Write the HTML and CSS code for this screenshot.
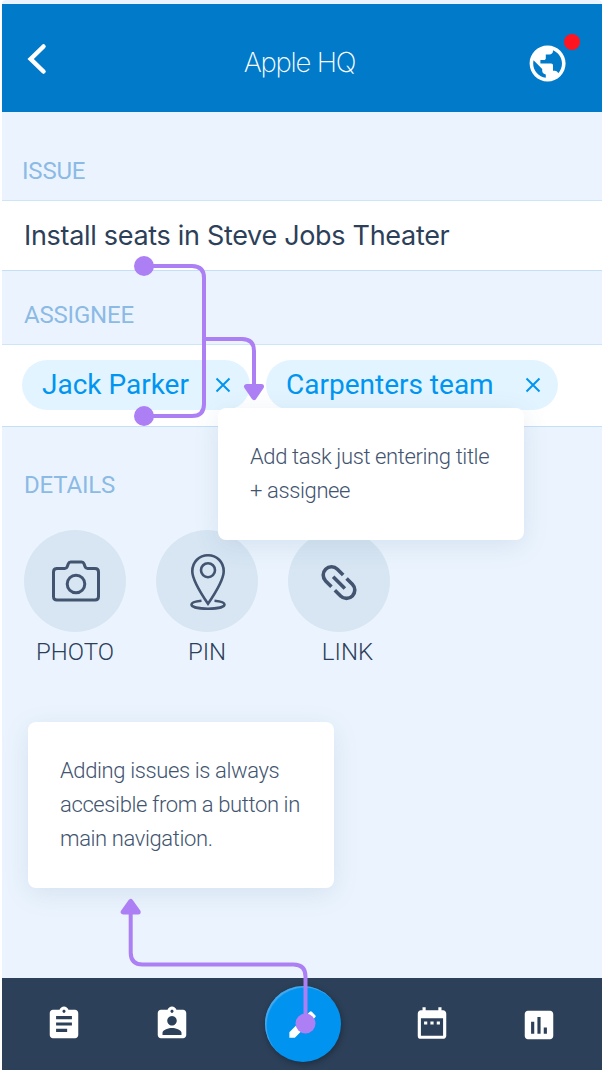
FILE: index.html
```html
<!DOCTYPE html>
<html lang="en">
<head>
<meta charset="utf-8">
<title>Apple HQ</title>
<link rel="stylesheet" href="styles.css">
</head>
<body>
<div class="screen">
  <header class="topbar">
    <svg class="back" width="20" height="32" viewBox="0 0 20 32"><path d="M16.500 3.500 3.700 16 16.500 28.500"/></svg>
    <h1 class="title">Apple HQ</h1>
    <div class="globe">
      <svg width="43.2" height="43.2" viewBox="0 0 24 24"><path d="M12 2C6.48 2 2 6.48 2 12s4.48 10 10 10 10-4.48 10-10S17.52 2 12 2zm-1 17.93c-3.95-.49-7-3.85-7-7.93 0-.62.08-1.21.21-1.79L9 15v1c0 1.1.9 2 2 2v1.93zm6.9-2.54c-.26-.81-1-1.39-1.9-1.39h-1v-3c0-.55-.45-1-1-1H8v-2h2c.55 0 1-.45 1-1V7h2c1.1 0 2-.9 2-2v-.41c2.93 1.19 5 4.06 5 7.41 0 2.08-.8 3.97-2.1 5.39z"/></svg>
      <span class="badge"></span>
    </div>
  </header>

  <main class="content">
    <h2 class="label label-issue">ISSUE</h2>
    <div class="row row-issue">Install seats in Steve Jobs Theater</div>
    <h2 class="label label-assignee">ASSIGNEE</h2>
    <div class="row row-chips">
      <div class="chip chip-person"><span class="chip-name">Jack Parker</span><svg width="16" height="16" viewBox="0 0 16 16"><path d="m1.5 1.5 13 13m0-13-13 13"/></svg></div>
      <div class="chip chip-team"><span class="chip-name">Carpenters team</span><svg width="16" height="16" viewBox="0 0 16 16"><path d="m1.5 1.5 13 13m0-13-13 13"/></svg></div>
    </div>
    <h2 class="label label-details">DETAILS</h2>
    <div class="details">
      <div class="detail">
        <span class="disc"><svg width="102" height="102" viewBox="0 0 102 102"><path d="M32 38.5h8.8c1.4 0 2-.5 2.4-1.7l1.1-3c.5-1.4 1-1.8 2.3-1.8h11.1c1.3 0 1.8.4 2.3 1.8l1.1 3c.4 1.2 1 1.7 2.4 1.7H71c2.4 0 3.500 1.100 3.500 3.500v24.500c0 2.400-1.100 3.500-3.500 3.500H33c-2.400 0-3.500-1.100-3.500-3.500V42c0-2.400 1.100-3.500 3.500-3.500z"/><circle cx="52" cy="54" r="8.800"/></svg></span>
        <span class="caption caption-photo">PHOTO</span>
      </div>
      <div class="detail">
        <span class="disc"><svg width="102" height="102" viewBox="0 0 102 102"><g class="fine"><path d="M52 73.800C44 62 36.300 50 36.300 41.200 36.300 32 43.300 25.200 52 25.200S67.700 32 67.700 41.200C67.700 50 60 62 52 73.800z"/><circle cx="52" cy="40.200" r="7"/><path d="M45.500 70.700c-5.800.6-10 2-10 3.800 0 2.400 7.200 4.200 16.500 4.200s16.500-1.800 16.500-4.200c0-1.800-4.200-3.200-10-3.800"/></g></svg></span>
        <span class="caption caption-pin">PIN</span>
      </div>
      <div class="detail">
        <span class="disc"><svg width="102" height="102" viewBox="0 0 102 102"><g class="bold" transform="translate(51 52.600) rotate(45)"><path d="M-2.400-8.300H-10.600a8.300 8.300 0 0 0 0 16.600H-2.400M2.400-8.300H10.600a8.300 8.300 0 0 1 0 16.600H2.400M-8.300 0H8.300"/></g></svg></span>
        <span class="caption caption-link">LINK</span>
      </div>
    </div>
  </main>

  <nav class="tabbar">
    <svg class="tab tab-list" width="38" height="38" viewBox="0 0 24 24"><path d="M19 3h-4.180C14.400 1.840 13.300 1 12 1c-1.300 0-2.400.840-2.820 2H5c-1.100 0-2 .9-2 2v14c0 1.100.9 2 2 2h14c1.100 0 2-.9 2-2V5c0-1.100-.9-2-2-2zm-7 0c.55 0 1 .45 1 1s-.45 1-1 1-1-.45-1-1 .45-1 1-1zm2 14H7v-2h7v2zm3-4H7v-2h10v2zm0-4H7V7h10v2z"/></svg>
    <svg class="tab tab-person" width="38" height="38" viewBox="0 0 24 24"><path d="M19 3h-4.180C14.400 1.840 13.300 1 12 1c-1.300 0-2.400.840-2.820 2H5c-1.100 0-2 .9-2 2v14c0 1.100.9 2 2 2h14c1.100 0 2-.9 2-2V5c0-1.100-.9-2-2-2zm-7 0c.55 0 1 .45 1 1s-.45 1-1 1-1-.45-1-1 .45-1 1-1zm0 4c1.660 0 3 1.340 3 3s-1.340 3-3 3-3-1.340-3-3 1.340-3 3-3zm6 12H6v-1.400c0-2 4-3.100 6-3.100s6 1.100 6 3.100V19z"/></svg>
    <div class="compose"><svg width="35" height="35" viewBox="0 0 24 24"><path d="M3 17.250V21h3.750L17.810 9.940l-3.750-3.750L3 17.250zM20.710 7.040a1 1 0 0 0 0-1.410l-2.340-2.340a1 1 0 0 0-1.410 0l-1.830 1.830 3.750 3.750 1.830-1.830z"/></svg></div>
    <svg class="tab tab-calendar" width="38" height="38" viewBox="0 0 24 24"><path d="M9 11H7v2h2v-2zm4 0h-2v2h2v-2zm4 0h-2v2h2v-2zm2-7h-1V2h-2v2H8V2H6v2H5c-1.110 0-1.990.9-1.990 2L3 20a2 2 0 0 0 2 2h14c1.100 0 2-.9 2-2V6c0-1.100-.9-2-2-2zm0 16H5V9h14v11z"/></svg>
    <svg class="tab tab-chart" width="38" height="38" viewBox="0 0 24 24"><path d="M19 3H5c-1.100 0-2 .9-2 2v14c0 1.100.9 2 2 2h14c1.100 0 2-.9 2-2V5c0-1.100-.9-2-2-2zM9 17.500H7v-7.500h2v7.500zm4 0h-2V7h2v10.500zm4 0h-2v-4h2v4z"/></svg>
  </nav>

  <aside class="note note-task">Add task just entering title<br>+ assignee</aside>
  <aside class="note note-nav">Adding issues is always<br>accesible from a button in<br>main navigation.</aside>
  <svg class="connector connector-task" width="140" height="180" viewBox="134 250 140 180">
    <path class="wire" d="M144 266H192Q204 266 204 278V404Q204 416 192 416H144M204 339H242Q254 339 254 351V388"/>
    <circle cx="144" cy="266" r="10"/><circle cx="144" cy="416" r="10"/>
    <path class="head" d="M246.500 386.500H261.500L254 397.500Z"/>
  </svg>
  <svg class="connector connector-nav" width="210" height="150" viewBox="114 890 210 150">
    <path class="wire" d="M305.500 1023V976.500Q305.500 964.500 293.500 964.500H142.700Q130.700 964.500 130.700 952.500V910"/>
    <circle cx="305.500" cy="1023.500" r="10"/>
    <path class="head" d="M123.200 912H138.200L130.700 901.500Z"/>
  </svg>
</div>
</body>
</html>
```
FILE: styles.css
```css
* { box-sizing: border-box; }

body {
  margin: 0;
  background: #fff;
  font-family: Roboto, "Liberation Sans", sans-serif;
  color: #2c4059;
}

svg { display: block; flex: none; }

.screen {
  position: relative;
  display: flex;
  flex-direction: column;
  width: 600px;
  height: 1070px;
  margin-left: 2px;
  padding-top: 4px;
  border-radius: 4px 4px 0 0;
  background: #ebf4fe;
}

/* Header */
.topbar {
  display: grid;
  grid-template-columns: 76px 1fr 76px;
  align-items: center;
  height: 108px;
  background: #007ac9;
}
.back { margin: 2px 0 0 25px; fill: none; stroke: #fff; stroke-width: 4.500; stroke-linecap: round; }
.title {
  margin: 7px 0 0 -5px;
  font: 200 27.500px/36px Inter, sans-serif;
  letter-spacing: -1.200px;
  text-align: center;
  color: #fff;
}
.globe { position: relative; width: 44px; margin-top: 12px; }
.globe svg { fill: #fff; }
.badge {
  position: absolute;
  top: -8px;
  left: 38px;
  width: 16px;
  height: 16px;
  border-radius: 50%;
  background: #ff1420;
}

/* Form */
.content { flex: 1; }
.label {
  margin: 0;
  padding-left: 22px;
  font-size: 24px;
  font-weight: 400;
  line-height: 28px;
  letter-spacing: -.200px;
  color: #8bbae5;
}
.label-issue { height: 88px; padding: 45px 0 0 20px; }
.label-assignee { height: 73px; padding-top: 30px; }
.label-details { height: 103px; padding-top: 44px; }
.row {
  display: flex;
  align-items: center;
  background: #fff;
  border-top: 1px solid #cde5f8;
  border-bottom: 1px solid #c4e0f7;
}
.row-issue {
  height: 71px;
  padding-left: 22px;
  font: 400 27px/34px Inter, sans-serif;
  letter-spacing: -.310px;
}
.row-chips { gap: 16px; height: 83px; padding: 0 0 1px 20px; }
.chip {
  display: flex;
  align-items: center;
  justify-content: space-between;
  height: 50px;
  padding: 0 17px 0 20px;
  border-radius: 25px;
  background: #e2f4ff;
  color: #0095f1;
  font-size: 28px;
  white-space: nowrap;
}
.chip-name { padding-bottom: 2px; }
.chip svg { fill: none; stroke: #0095f1; stroke-width: 2; }
.chip-person { width: 228px; padding-right: 19px; }
.chip-team { width: 292px; }

.details { display: flex; gap: 30px; padding-left: 22px; }
.detail { width: 102px; text-align: center; }
.disc { display: block; border-radius: 50%; background: #d8e6f3; }
.disc svg { fill: none; stroke: #42546f; stroke-width: 3; }
.disc .fine { stroke-width: 2.600; }
.disc .bold { stroke-width: 3.600; }
.caption { display: block; margin-top: 6px; font-size: 24px; line-height: 28px; font-weight: 300; }
.caption-link { padding-left: 17px; }

/* Bottom navigation */
.tabbar {
  display: grid;
  grid-template-columns: 108px 107px 155px 104px 110px;
  align-items: center;
  justify-items: center;
  height: 92px;
  padding-left: 8px;
  background: #2c4059;
}
.tab { fill: #fff; }
.tab-calendar { margin-top: -2px; }
.tab-chart { margin-top: 2px; }
.compose {
  display: grid;
  place-items: center;
  width: 76px;
  height: 76px;
  border-radius: 50%;
  background: #0093ef;
  box-shadow: inset 1.500px 1.500px 1px #48a9ec, 1px 2px 6px rgba(0, 0, 0, .3);
}
.compose svg { fill: #fff; }

/* Annotations floating over the screen */
.note {
  position: absolute;
  width: 306px;
  padding: 32px;
  border-radius: 8px;
  background: #fff;
  box-shadow: 0 6px 26px rgba(50, 95, 140, .12);
  color: #42546f;
  font-size: 22px;
  line-height: 34px;
  font-weight: 300;
  letter-spacing: -.380px;
  white-space: nowrap;
}
.note-task { top: 408px; left: 216px; height: 132px; }
.note-nav { top: 722px; left: 26px; height: 166px; }
.connector { position: absolute; fill: #ad7ff5; stroke: #ad7ff5; stroke-width: 0; }
.connector .wire { fill: none; stroke-width: 4; }
.connector .head { stroke-width: 5; stroke-linejoin: round; }
.connector-task { top: 250px; left: 132px; }
.connector-nav { top: 890px; left: 112px; }
```
